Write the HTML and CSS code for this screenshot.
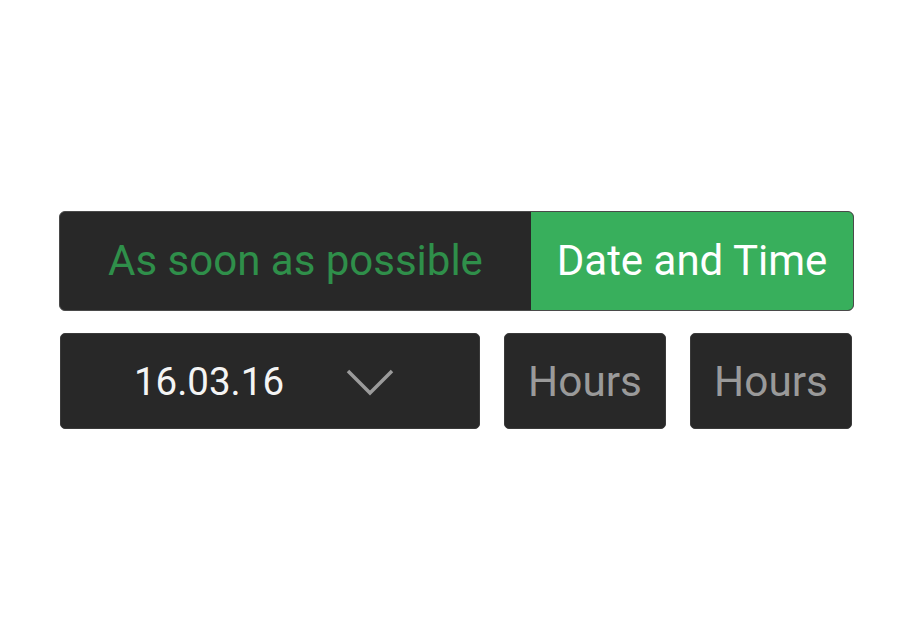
FILE: index.html
```html
<!DOCTYPE html>
<html>
<head>
<meta charset="utf-8">
<link rel="stylesheet" href="styles.css">
</head>
<body>
<div class="page">
  <div class="picker">
    <div class="toggle">
      <div class="seg seg-off">As soon as possible</div>
      <div class="seg seg-on">Date and Time</div>
    </div>
    <div class="row">
      <div class="box date">
        <span class="date-text">16.03.16</span>
        <svg class="chevron" width="50" height="28" viewBox="0 0 50 28"><polyline points="3,3 25,25 47,3" fill="none" stroke="#9b9b9b" stroke-width="3.5"/></svg>
      </div>
      <div class="box hours">Hours</div>
      <div class="box hours">Hours</div>
    </div>
  </div>
</div>
</body>
</html>
```
FILE: styles.css
```css
html, body {
  margin: 0;
  padding: 0;
  background: #ffffff;
}
body {
  font-family: Roboto, "Liberation Sans", sans-serif;
}
.page {
  width: 912px;
  height: 642px;
  padding: 211px 0 0 59px;
  box-sizing: border-box;
}
.picker {
  width: 795px;
  display: flex;
  flex-direction: column;
  gap: 22px;
}
.toggle {
  display: flex;
  height: 100px;
  box-sizing: border-box;
  border: 1px solid #4a4a4a;
  border-radius: 6px;
  overflow: hidden;
  background: #282828;
}
.seg {
  display: flex;
  align-items: center;
  justify-content: center;
  font-size: 42px;
  padding-bottom: 2px;
}
.seg-off {
  width: 471px;
  color: #2f8f4a;
}
.seg-on {
  flex: 1;
  background: #38af5c;
  color: #ffffff;
}
.row {
  display: flex;
  gap: 24px;
  padding-left: 1px;
}
.box {
  height: 96px;
  box-sizing: border-box;
  background: #282828;
  border: 1px solid #3a3a3a;
  border-radius: 5px;
  display: flex;
  align-items: center;
  justify-content: center;
}
.date {
  width: 420px;
  gap: 61px;
  padding-right: 11px;
  font-size: 38.5px;
  color: #f4f4f4;
}
.chevron {
  display: block;
  margin-top: 2px;
}
.hours {
  width: 162px;
  font-size: 42.3px;
  color: #9a9a9a;
}
```
